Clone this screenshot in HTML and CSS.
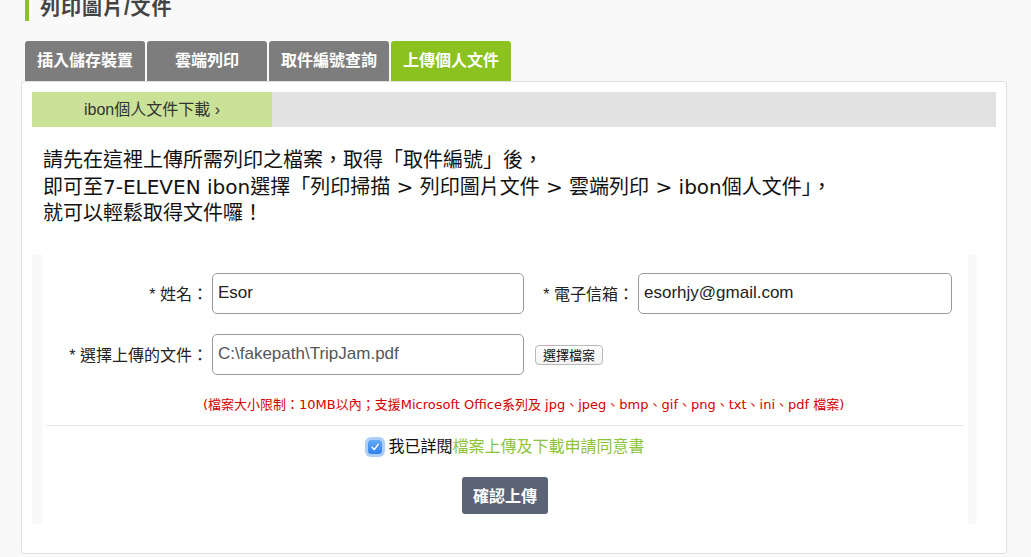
FILE: index.html
```html
<!DOCTYPE html>
<html lang="zh-Hant">

<head>
    <meta charset="UTF-8">
    <meta name="viewport" content="width=device-width, initial-scale=1.0">
    <link rel="stylesheet" href="styles.css">
</head>

<body>
    <div class="page">
        <h2 class="title">列印圖片/文件</h2>

        <!-- 主要分頁 -->
        <ul class="tabs">
            <li>插入儲存裝置</li>
            <li>雲端列印</li>
            <li>取件編號查詢</li>
            <li class="active">上傳個人文件</li>
        </ul>

        <div class="panel">
            <div class="subtabs">
                <a class="subtab current">ibon個人文件下載 ›</a>
            </div>

            <p class="intro">請先在這裡上傳所需列印之檔案，取得「取件編號」後，<br>即可至7-ELEVEN ibon選擇「列印掃描 &gt; 列印圖片文件 &gt; 雲端列印 &gt; ibon個人文件」，<br>就可以輕鬆取得文件囉！</p>

            <div class="form-box">
                <div class="form-inner">
                    <div class="form-grid">
                        <label class="field-label">* 姓名：</label>
                        <input class="field" type="text" value="Esor">
                        <label class="field-label">* 電子信箱：</label>
                        <input class="field" type="text" value="esorhjy@gmail.com">

                        <label class="field-label">* 選擇上傳的文件：</label>
                        <input class="field file-path" type="text" value="C:\fakepath\TripJam.pdf">
                        <button class="pick-btn" type="button">選擇檔案</button>
                    </div>

                    <p class="note">(檔案大小限制：10MB以內；支援Microsoft Office系列及 jpg、jpeg、bmp、gif、png、txt、ini、pdf 檔案)</p>

                    <div class="divider"></div>

                    <div class="agree">
                        <span class="check">
                            <svg width="10" height="10" viewBox="0 0 10 10"><path d="M2 5.3 L4.2 7.6 L8.2 2.4" fill="none" stroke="#fff" stroke-width="1.5" stroke-linecap="round" stroke-linejoin="round"/></svg>
                        </span>
                        我已詳閱<a class="agree-link">檔案上傳及下載申請同意書</a>
                    </div>

                    <div class="actions">
                        <button class="submit" type="button">確認上傳</button>
                    </div>
                </div>
            </div>
        </div>
    </div>
</body>

</html>
```

FILE: styles.css
```css
body,
ul,
li,
p,
h2 {
    margin: 0;
    padding: 0;
    list-style: none;
}

body {
    background: #f9f9f9;
    font-family: "Liberation Sans", "Noto Sans CJK TC", sans-serif;
    color: #222;
}

.page {
    width: 1031px;
}

/* 標題 */
.title {
    margin-left: 25px;
    height: 21px;
    line-height: 17px;
    border-left: 4px solid #8cc21f;
    padding-left: 11px;
    font-size: 20px;
    font-weight: bold;
    letter-spacing: 1px;
    color: #444;
}

/* 分頁 */
.tabs {
    display: flex;
    gap: 2px;
    margin: 20px 0 0 25px;
}

.tabs li {
    width: 120px;
    height: 40px;
    line-height: 40px;
    text-align: center;
    background: #7d7d7d;
    color: #fff;
    font-size: 16px;
    font-weight: bold;
    border-radius: 3px 3px 0 0;
}

.tabs li.active {
    background: #8cc21f;
}

.panel {
    margin-left: 21px;
    width: 986px;
    box-sizing: border-box;
    background: #fff;
    border: 1px solid #e0e0e0;
    border-radius: 3px;
    padding: 10px 10px 29px;
}

.subtabs {
    display: flex;
    height: 35px;
    background: #e2e2e2;
}

.subtab {
    width: 240px;
    line-height: 35px;
    text-align: center;
    font-size: 16px;
    color: #333;
}

.subtab.current {
    background: #c9e298;
}

.intro {
    padding: 20px 0 0 11px;
    margin-bottom: 27px;
    font-family: "DejaVu Sans", "Noto Sans CJK TC", sans-serif;
    font-size: 20px;
    line-height: 26.5px;
    color: #111;
}

/* 表單 */
.form-box {
    width: 945px;
    background: #f9f9f9;
    padding: 0 9px 0 10px;
    box-sizing: border-box;
}

.form-inner {
    background: #fff;
    padding: 19px 0 10px;
}

.form-grid {
    display: grid;
    grid-template-columns: 170px 312px 114px 314px;
    grid-auto-rows: 41px;
    row-gap: 20px;
    align-items: center;
}

.field-label {
    text-align: right;
    padding-right: 4px;
    font-size: 16px;
    color: #222;
}

.field {
    height: 41px;
    box-sizing: border-box;
    border: 1px solid #999;
    border-radius: 5px;
    padding: 0 5px;
    font-family: "Liberation Sans", "Noto Sans CJK TC", sans-serif;
    font-size: 17px;
    color: #222;
}

.field.file-path {
    color: #555;
}

.pick-btn {
    justify-self: start;
    margin: 2px 0 0 11px;
    height: 20px;
    padding: 0 7px;
    border: 1px solid #b8b8b8;
    border-radius: 4px;
    background: linear-gradient(#fff, #f3f3f3);
    font-family: "Noto Sans CJK TC", sans-serif;
    font-size: 13px;
    line-height: 18px;
    color: #111;
}

.note {
    margin-top: 20px;
    padding-left: 161px;
    line-height: 20px;
    font-family: "DejaVu Sans", "Noto Sans CJK TC", sans-serif;
    font-size: 13px;
    color: #d40000;
}

.divider {
    margin: 10px 4px 0;
    height: 1px;
    background: #e6e6e6;
}

.agree {
    margin-top: 11px;
    display: flex;
    justify-content: center;
    align-items: center;
    line-height: 20px;
    font-size: 16px;
    color: #111;
}

.check {
    width: 14px;
    height: 14px;
    border-radius: 3px;
    background: linear-gradient(#64a9f8, #2f80ea);
    box-shadow: 0 0 0 3px rgba(110, 165, 240, 0.55);
    display: flex;
    align-items: center;
    justify-content: center;
    margin: 0 6px 0 3px;
}

.agree-link {
    color: #8dc43a;
}

.actions {
    margin-top: 20px;
    text-align: center;
}

.submit {
    width: 86px;
    height: 37px;
    border: 0;
    border-radius: 3px;
    background: #5b6476;
    color: #fff;
    font-family: "Noto Sans CJK TC", sans-serif;
    font-size: 16px;
    font-weight: bold;
}
```
